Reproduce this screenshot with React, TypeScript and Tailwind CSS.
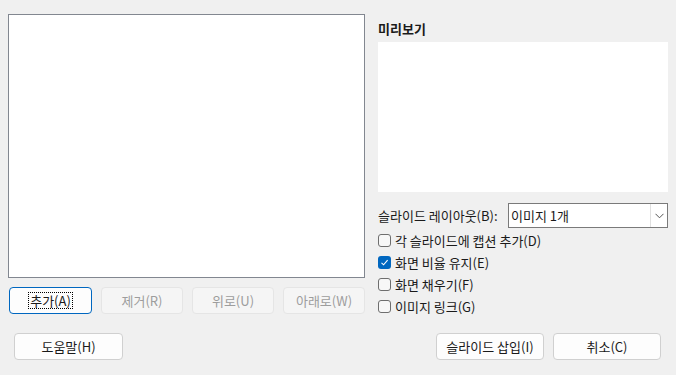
import React from 'react';

const font = { fontFamily: '"Noto Sans CJK KR", "Noto Sans", sans-serif' };

function Btn({ label, disabled, focused, className = '' }: { label: string; disabled?: boolean; focused?: boolean; className?: string }) {
  if (focused) {
    return (
      <div className={`flex items-center justify-center h-[27px] rounded-[4px] border border-[#0067c0] bg-[#fdfdfd] text-[13px] text-[#1a1a1a] ${className}`}>
        <span className="border border-dotted border-black px-[1px] leading-[15px]">{label}</span>
      </div>
    );
  }
  return (
    <div
      className={`flex items-center justify-center h-[27px] rounded-[4px] border text-[13px] leading-none ${
        disabled ? 'border-[#e5e5e5] bg-[#f5f5f5] text-[#9d9d9d]' : 'border-[#d0d0d0] bg-[#fdfdfd] text-[#1a1a1a]'
      } ${className}`}
    >
      {label}
    </div>
  );
}

function Check({ label, checked }: { label: string; checked?: boolean }) {
  return (
    <div className="flex items-center h-[22px]">
      {checked ? (
        <span className="w-[13px] h-[13px] rounded-[3px] bg-[#0067c0] flex items-center justify-center">
          <svg width="9" height="9" viewBox="0 0 9 9" fill="none">
            <path d="M1.5 4.8 L3.6 6.8 L7.6 2.2" stroke="white" strokeWidth="1.1" />
          </svg>
        </span>
      ) : (
        <span className="w-[13px] h-[13px] rounded-[3px] border border-[#6e6e6e] bg-[#f7f7f7]" />
      )}
      <span className="ml-[4px] text-[13px] leading-none text-[#1a1a1a]">{label}</span>
    </div>
  );
}

export default function App() {
  return (
    <div className="w-[676px] h-[375px] bg-[#f0f0f0] overflow-hidden" style={font}>
      <div className="flex pt-[14px] pl-[8px]">
        {/* 왼쪽 목록 */}
        <div className="w-[357px]">
          <div className="h-[264px] bg-white border border-[#828790]" />
          <div className="mt-[9px] flex gap-[9px] pl-[1px]">
            <Btn label="추가(A)" focused className="w-[83px]" />
            <Btn label="제거(R)" disabled className="w-[82px]" />
            <Btn label="위로(U)" disabled className="w-[82px]" />
            <Btn label="아래로(W)" disabled className="w-[82px]" />
          </div>
        </div>

        {/* 오른쪽 미리보기 */}
        <div className="ml-[13px] w-[290px]">
          <div className="h-[28px] flex items-center text-[13px] font-bold text-[#1a1a1a] leading-none">미리보기</div>
          <div className="h-[150px] bg-white" />
          <div className="mt-[11px] flex items-center h-[25px]">
            <span className="w-[130px] text-[13px] leading-none text-[#1a1a1a]">슬라이드 레이아웃(B):</span>
            <div className="flex-1 h-[25px] bg-white border border-[#7a7a7a] flex items-center">
              <span className="flex-1 pl-[2px] text-[13px] leading-none text-[#1a1a1a]">이미지 1개</span>
              <span className="w-[17px] h-[23px] border-l border-[#e0e0e0] flex items-center justify-center">
                <svg width="9" height="6" viewBox="0 0 9 6" fill="none">
                  <path d="M0.5 0.8 L4.5 4.8 L8.5 0.8" stroke="#555" strokeWidth="1" />
                </svg>
              </span>
            </div>
          </div>
          <div className="mt-[1px]">
            <Check label="각 슬라이드에 캡션 추가(D)" />
            <Check label="화면 비율 유지(E)" checked />
            <Check label="화면 채우기(F)" />
            <Check label="이미지 링크(G)" />
          </div>
        </div>
      </div>

      {/* 하단 버튼 */}
      <div className="mt-[16px] flex items-center pl-[14px] pr-[14px]">
        <Btn label="도움말(H)" className="w-[109px]" />
        <div className="flex-1" />
        <div className="flex gap-[9px] pr-[1px]">
          <Btn label="슬라이드 삽입(I)" className="w-[108px]" />
          <Btn label="취소(C)" className="w-[108px]" />
        </div>
      </div>
    </div>
  );
}
